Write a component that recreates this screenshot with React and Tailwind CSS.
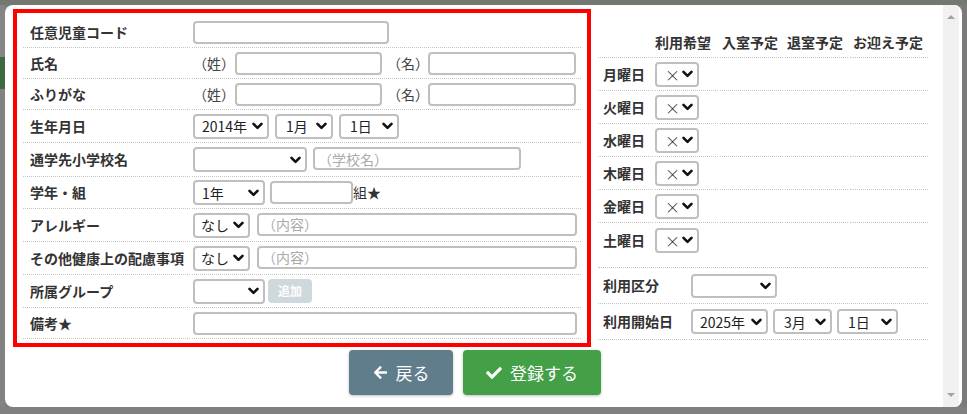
import { FaArrowLeft, FaCheck } from 'react-icons/fa';

// Small bold chevron used on every select box
function Chevron() {
  return (
    <svg width="11" height="8" viewBox="0 0 11 8" className="shrink-0">
      <polyline points="1.5,1.8 5.5,5.8 9.5,1.8" fill="none" stroke="#111" strokeWidth="2.6" strokeLinecap="round" strokeLinejoin="round" />
    </svg>
  );
}

function Select({ value = '', w, h = 'h-[25px]', pl = 'pl-[7px]', text = 'text-[14px]' }) {
  return (
    <div className={`flex ${h} ${w} ${pl} shrink-0 items-center justify-between rounded-[4px] border-2 border-[#bfbfbf] bg-white pr-[4px] ${text} text-[#222]`}>
      <span className="whitespace-nowrap leading-none">{value}</span>
      <Chevron />
    </div>
  );
}

function Input({ w, placeholder = '' }) {
  return (
    <div className={`flex h-[23px] ${w} shrink-0 items-center rounded-[4px] border-2 border-[#bfbfbf] bg-white px-[3px] text-[14px] text-[#aaa]`}>
      <span className="whitespace-nowrap leading-none">{placeholder}</span>
    </div>
  );
}

// Left form row: label cell + field cell, dotted bottom rule split between the two
function Row({ label, h, children }) {
  return (
    <div className={`flex gap-[2px] ${h}`}>
      <div className="flex w-[167px] items-center border-b border-dotted border-[#c6c6c6] pl-[7px] text-[14px] font-bold text-[#333]">
        {label}
      </div>
      <div className="flex flex-1 items-center border-b border-dotted border-[#c6c6c6] pl-[1px] text-[14px] text-[#444]">
        {children}
      </div>
    </div>
  );
}

const days = ['月曜日', '火曜日', '水曜日', '木曜日', '金曜日', '土曜日'];

function DayRow({ day, last }) {
  const line = last ? 'pb-[10px]' : 'border-b border-dotted border-[#c6c6c6]';
  return (
    <div className={`flex gap-[2px] ${last ? 'h-[44px]' : 'h-[33px]'}`}>
      <div className={`flex w-[55px] items-center pl-[5px] text-[14px] font-bold text-[#333] ${line}`}>{day}</div>
      <div className={`flex w-[63px] items-center ${line}`}>
        <Select value="×" w="w-[44px]" pl="pl-[8px]" text="text-[15px] font-light" />
      </div>
      <div className={`w-[63px] ${line}`} />
      <div className={`w-[63px] ${line}`} />
      <div className={`w-[78px] ${line}`} />
    </div>
  );
}

export default function App() {
  return (
    <div className="h-[414px] w-[967px] overflow-hidden bg-[#7d7d7d] font-['Noto_Sans_CJK_JP','Noto_Sans',sans-serif]">
      <div className="h-[5px] bg-[#737870]" />
      <div className="flex">
        <div className="flex h-[402px] w-[5px] flex-col">
          <div className="h-[52px] bg-[#858585]" />
          <div className="h-[32px] bg-[#3f6a40]" />
          <div className="flex-1 bg-[#828282]" />
        </div>

        {/* Modal */}
        <div className="flex h-[402px] w-[957px] overflow-hidden rounded-[8px] bg-white pr-[3px]">
          <div className="flex flex-1 flex-col pl-[8px] pt-[4px]">
            <div className="flex">
              {/* Highlighted form */}
              <div className="w-[578px] border-4 border-[#ff0000] px-[6px] pb-[4px] pt-[4px]">
                <Row label="任意児童コード" h="h-[31px]">
                  <Input w="w-[196px]" />
                </Row>
                <Row label="氏名" h="h-[31px]">
                  <span className="w-[42px] shrink-0">（姓）</span>
                  <Input w="w-[147px]" />
                  <span className="ml-[5px] w-[41px] shrink-0">（名）</span>
                  <Input w="w-[148px]" />
                </Row>
                <Row label="ふりがな" h="h-[31px]">
                  <span className="w-[42px] shrink-0">（姓）</span>
                  <Input w="w-[147px]" />
                  <span className="ml-[5px] w-[41px] shrink-0">（名）</span>
                  <Input w="w-[148px]" />
                </Row>
                <Row label="生年月日" h="h-[33px]">
                  <div className="flex gap-[6px]">
                    <Select value="2014年" w="w-[76px]" />
                    <Select value="1月" w="w-[58px]" pl="pl-[9px]" />
                    <Select value="1日" w="w-[60px]" pl="pl-[9px]" />
                  </div>
                </Row>
                <Row label="通学先小学校名" h="h-[34px]">
                  <div className="flex gap-[6px]">
                    <Select w="w-[114px]" />
                    <Input w="w-[208px]" placeholder="（学校名）" />
                  </div>
                </Row>
                <Row label="学年・組" h="h-[32px]">
                  <Select value="1年" w="w-[72px]" />
                  <div className="ml-[5px]">
                    <Input w="w-[83px]" />
                  </div>
                  <span className="text-[#333]">組★</span>
                </Row>
                <Row label="アレルギー" h="h-[33px]">
                  <div className="flex gap-[7px]">
                    <Select value="なし" w="w-[57px]" pl="pl-[6px]" />
                    <Input w="w-[320px]" placeholder="（内容）" />
                  </div>
                </Row>
                <Row label="その他健康上の配慮事項" h="h-[33px]">
                  <div className="flex gap-[7px]">
                    <Select value="なし" w="w-[57px]" pl="pl-[6px]" />
                    <Input w="w-[320px]" placeholder="（内容）" />
                  </div>
                </Row>
                <Row label="所属グループ" h="h-[33px]">
                  <Select w="w-[72px]" />
                  <button className="ml-[3px] flex h-[24px] w-[44px] items-center justify-center rounded-[4px] bg-[#cfd8dc] text-[12px] font-bold text-white">
                    追加
                  </button>
                </Row>
                <Row label="備考★" h="h-[31px]">
                  <Input w="w-[384px]" />
                </Row>
              </div>

              {/* Weekly schedule */}
              <div className="ml-[7px] w-[330px]">
                <div className="flex h-[49px] gap-[2px] text-[14px] font-bold text-[#333]">
                  <div className="w-[55px] border-b border-dotted border-[#c6c6c6]" />
                  <div className="flex w-[63px] items-end border-b border-dotted border-[#c6c6c6] pb-[4px] whitespace-nowrap">利用希望</div>
                  <div className="flex w-[63px] items-end border-b border-dotted border-[#c6c6c6] pb-[4px] pl-[2px] whitespace-nowrap">入室予定</div>
                  <div className="flex w-[63px] items-end border-b border-dotted border-[#c6c6c6] pb-[4px] pl-[2px] whitespace-nowrap">退室予定</div>
                  <div className="flex w-[78px] items-end border-b border-dotted border-[#c6c6c6] pb-[4px] pl-[3px] whitespace-nowrap">お迎え予定</div>
                </div>
                {days.map((d, i) => (
                  <DayRow key={d} day={d} last={i === days.length - 1} />
                ))}
                <div className="border-t border-dotted border-[#c6c6c6]">
                  <div className="flex h-[36px] gap-[2px]">
                    <div className="flex w-[89px] items-center border-b border-dotted border-[#c6c6c6] pl-[5px] text-[14px] font-bold text-[#333]">利用区分</div>
                    <div className="flex flex-1 items-center border-b border-dotted border-[#c6c6c6] pl-[2px]">
                      <Select w="w-[86px]" h="h-[24px]" />
                    </div>
                  </div>
                  <div className="flex h-[36px] gap-[2px]">
                    <div className="flex w-[89px] items-center border-b border-dotted border-[#c6c6c6] pl-[5px] text-[14px] font-bold text-[#333]">利用開始日</div>
                    <div className="flex flex-1 items-center gap-[5px] border-b border-dotted border-[#c6c6c6] pl-[2px]">
                      <Select value="2025年" w="w-[77px]" />
                      <Select value="3月" w="w-[59px]" pl="pl-[9px]" />
                      <Select value="1日" w="w-[61px]" pl="pl-[9px]" />
                    </div>
                  </div>
                </div>
              </div>
            </div>

            {/* Actions */}
            <div className="mt-[3px] flex justify-center gap-[10px] pr-[6px]">
              <button className="flex h-[45px] w-[104px] items-center justify-center gap-[8px] rounded-[4px] bg-[#607d8b] text-[17px] text-white shadow-[0_1px_3px_rgba(0,0,0,0.25)]">
                <FaArrowLeft className="text-[15px]" />
                <span>戻る</span>
              </button>
              <button className="flex h-[45px] w-[138px] items-center justify-center gap-[8px] rounded-[4px] bg-[#43a047] text-[17px] text-white shadow-[0_1px_3px_rgba(0,0,0,0.25)]">
                <FaCheck className="text-[16px]" />
                <span>登録する</span>
              </button>
            </div>
          </div>

          {/* Scrollbar */}
          <div className="flex w-[16px] flex-col items-center justify-between bg-[#f1f1f1] py-[10px]">
            <div className="h-0 w-0 border-x-[4px] border-b-[4px] border-x-transparent border-b-[#a3a3a3]" />
            <div className="h-0 w-0 border-x-[4px] border-t-[4px] border-x-transparent border-t-[#a3a3a3]" />
          </div>
        </div>
        <div className="h-[402px] w-[5px] bg-[#7a7a7a]" />
      </div>
      <div className="h-[7px] bg-[#808080]" />
    </div>
  );
}
